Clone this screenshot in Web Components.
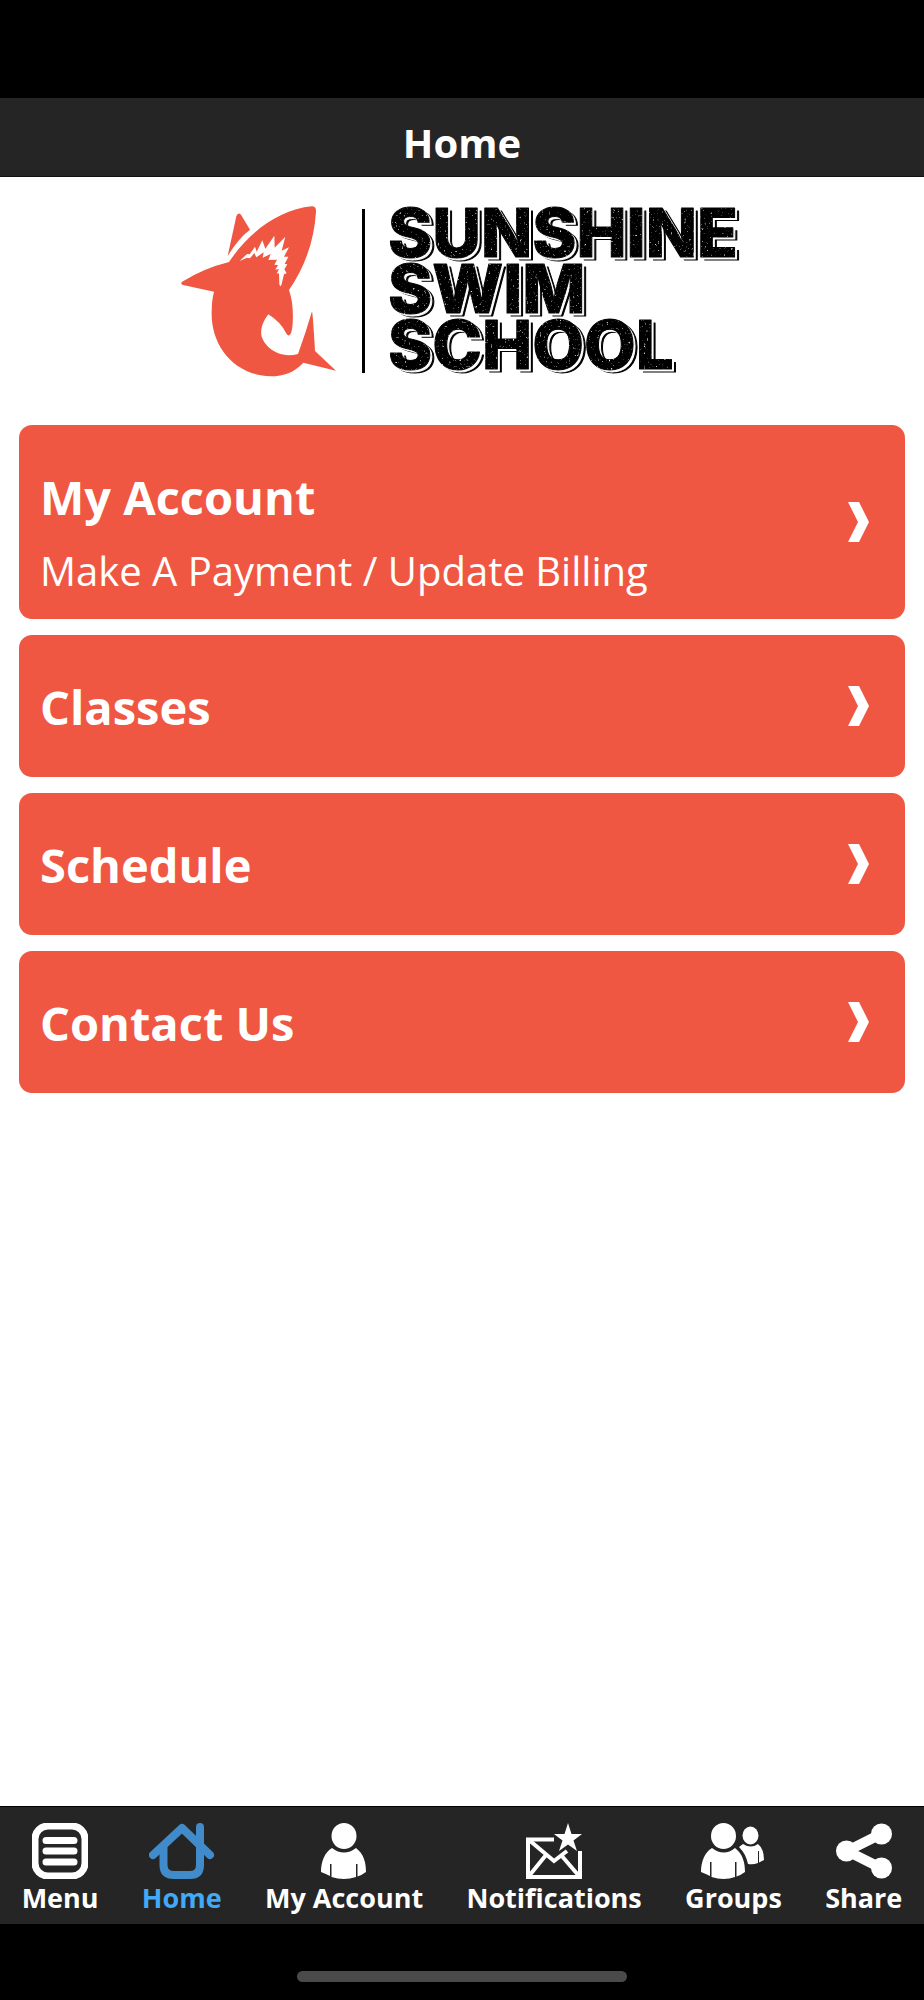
<!DOCTYPE html>
<html lang="en">
<head>
<meta charset="utf-8">
<meta name="viewport" content="width=device-width, initial-scale=1">
<title>Sunshine Swim School</title>
<style>
body { margin: 0; background: #fff; font-family: "Open Sans", "Noto Sans", sans-serif; }
</style>
</head>
<body>
<swim-app>
  <app-header slot="header">Home</app-header>
  <school-logo></school-logo>
  <nav-cards>
    <link-card subtitle="Make A Payment / Update Billing">My Account</link-card>
    <link-card>Classes</link-card>
    <link-card>Schedule</link-card>
    <link-card>Contact Us</link-card>
  </nav-cards>
  <tab-bar slot="footer">
    <tab-item icon="menu">Menu</tab-item>
    <tab-item icon="home" active>Home</tab-item>
    <tab-item icon="person">My Account</tab-item>
    <tab-item icon="mail">Notifications</tab-item>
    <tab-item icon="group">Groups</tab-item>
    <tab-item icon="share">Share</tab-item>
  </tab-bar>
</swim-app>
<script>
const define = (name, render) => customElements.define(name, class extends HTMLElement {
  constructor() { super(); this.attachShadow({ mode: 'open' }); }
  connectedCallback() { this.shadowRoot.innerHTML = render(this); }
});

define('swim-app', () => `
<style>
:host { display: flex; flex-direction: column; min-height: 100vh; background: #fff; }
.safe { height: 98px; background: #000; }
main { flex: 1; display: flex; flex-direction: column; }
.gesture { height: 76px; box-sizing: border-box; padding-top: 47px; background: #000; }
.gesture div { width: 330px; height: 11px; margin: 0 auto; border-radius: 6px; background: #4a4a4a; }
</style>
<div class="safe"></div><slot name="header"></slot>
<main><slot></slot></main>
<slot name="footer"></slot><div class="gesture"><div></div></div>`);

define('app-header', () => `
<style>
:host { display: block; box-sizing: border-box; height: 79px; padding-top: 17px; background: #252525; border-bottom: 1px solid #111; }
h1 { margin: 0; font-size: 40px; line-height: 56px; font-weight: 700; text-align: center; color: #fff; }
</style><h1><slot></slot></h1>`);

define('school-logo', () => `
<style>
:host { display: flex; justify-content: center; padding: 29px 0 48px; }
.shark { width: 156px; height: 171px; margin-right: 25px; }
.bar { width: 3px; height: 164px; margin: 3px 26px 0 0; background: #000; }
.name { width: 353px; height: 171px; overflow: visible; }
text { font-family: Inter, sans-serif; font-weight: 800; font-size: 67px; fill: #000; stroke: #000; stroke-width: 1px; stroke-linejoin: round; }
</style>
<svg class="shark" viewBox="32 32 468 513" aria-hidden="true">
<g fill="#ef5742">
<path d="M172 182 L198 63Q203 49 212 58L239 103Q205 128 172 182Z"/>
<path d="M176 200C235 112 325 42 425 33Q438 33 437 49C432 130 407 210 356 284C367 315 369 350 367 385Q365 414 357 420Q351 422 347 413Q331 380 294 357C277 380 271 398 273 420C278 446 318 493 383 476Q407 410 425 348Q428 360 434 467L497 526L399 502C370 532 342 542 301 543C190 540 121 450 124 350Q124 315 131 289L38 269Q27 264 38 258Q100 219 176 200Z"/>
</g>
<path fill="#fff" d="M208 197L230 176L238 177L254 154L259 169L276 135L285 160L312 121L313 157L345 124L334 166L356 156L341 184L354 184L343 206L351 207L342 222L349 234L341 237L333 270Q329 276 327 267L326 234L319 235L326 221L315 223L323 209L312 208L320 193L294 194L301 176L277 187L280 171L258 186L252 173L239 189L230 187Z"/>
</svg>
<div class="bar"></div>
<svg class="name" viewBox="0 0 353 171" role="img" aria-label="Sunshine Swim School">
<filter id="stamp" x="-5%" y="-5%" width="110%" height="110%" color-interpolation-filters="sRGB">
  <feOffset in="SourceGraphic" dx="4" dy="3" result="shade"/>
  <feOffset in="SourceAlpha" dx="2" dy="2" result="gap"/>
  <feFlood flood-color="#fff"/><feComposite in2="gap" operator="in" result="white"/>
  <feTurbulence type="fractalNoise" baseFrequency="0.45" numOctaves="2" seed="4"/>
  <feColorMatrix values="0 0 0 0 1  0 0 0 0 1  0 0 0 0 1  4 0 0 0 -2.6"/>
  <feComposite in2="SourceAlpha" operator="in" result="specks"/>
  <feMerge><feMergeNode in="shade"/><feMergeNode in="white"/><feMergeNode in="SourceGraphic"/><feMergeNode in="specks"/></feMerge>
</filter>
<g filter="url(#stamp)"><text x="-3" y="51">SUNSHINE</text><text x="-3" y="107">SWIM</text><text x="-3" y="163">SCHOOL</text></g>
</svg>`);

define('nav-cards', () => `
<style>:host { display: flex; flex-direction: column; gap: 16px; padding: 0 19px; }</style><slot></slot>`);

define('link-card', el => {
  const subtitle = el.getAttribute('subtitle');
  return `
<style>
:host { display: block; }
a { display: flex; align-items: center; justify-content: space-between; padding: 0 36px 0 21px; border-radius: 13px; background: #ef5742; color: #fff; text-decoration: none; }
.text { padding: 36px 0 34px; }
.text.double { padding-bottom: 10px; }
.title { display: block; font-size: 47px; line-height: 72px; font-weight: 700; }
.sub { display: block; font-size: 40px; line-height: 76px; font-weight: 400; }
svg { width: 21px; height: 40px; flex: none; }
</style>
<a href="#"><span class="text ${subtitle ? 'double' : ''}"><span class="title"><slot></slot></span>${subtitle ? `<span class="sub">${subtitle}</span>` : ''}</span>
<svg viewBox="0 0 21 40" aria-hidden="true"><path fill="#fff" d="M0 0H11L21 20L11 40H0L10 20Z"/></svg></a>`;
});

define('tab-bar', () => `
<style>
:host { display: block; background: #252525; border-top: 1px solid #000; }
nav { display: flex; justify-content: space-around; box-sizing: border-box; height: 117px; padding-top: 16px; }
</style><nav><slot></slot></nav>`);

const icons = {
  menu: [56, '<rect x="3" y="3" width="50" height="50" rx="13" fill="none" stroke="currentColor" stroke-width="7"/><path d="M14 17.500H42M14 28H42M14 39H42" stroke="currentColor" stroke-width="7" stroke-linecap="round"/>'],
  home: [66, '<g fill="none" stroke="currentColor" stroke-width="8" stroke-linecap="round" stroke-linejoin="round"><path d="M4 32L33 5L61 32M51 4V22"/><path d="M14.500 24V42Q14.500 52 25 52H41Q51 52 51 42V24"/></g>'],
  person: [46, '<ellipse cx="23" cy="13" rx="12.500" ry="13"/><path d="M11 25Q23 34 35 25C43 31 45 40 45 49Q41 52 36.500 53.500V41H35V54Q23 58 10.500 54V41H9V53Q5 51 0 49C0 38 4 29 11 25Z"/>'],
  mail: [56, '<path d="M28 16.500H2V54H54V28" fill="none" stroke="currentColor" stroke-width="4"/><path d="M3 17L28 38L41 28M3 53L20 32M53 53L35 32" fill="none" stroke="currentColor" stroke-width="4"/><path d="M42 0L45.500 11H56L47.500 17.500L51 28L42 21.500L33 28L36.500 17.500L28 11H38.500Z"/>'],
  group: [64, '<ellipse cx="22.500" cy="13" rx="12.500" ry="13"/><path d="M11 25Q23 34 34 25C42 31 44 40 44 49Q40 52 35.500 53.500V39H34V54Q23 58 10.500 54V39H9V53Q5 51 0 49C0 38 4 29 11 25Z"/><ellipse cx="49.500" cy="12.500" rx="8" ry="9"/><path d="M42 21Q50 26 57 21Q63 26 63 37L58 39.500V28H57V40Q52 42 47 41Q45 31 38 24Z"/>'],
  share: [56, '<circle cx="10.500" cy="28" r="10.500"/><circle cx="45.500" cy="11" r="10.500"/><circle cx="45.500" cy="45" r="10.500"/><path d="M45 11L11 28L45 45" fill="none" stroke="currentColor" stroke-width="10"/>']
};

define('tab-item', el => {
  const [w, art] = icons[el.getAttribute('icon')];
  return `
<style>
:host { display: block; }
a { display: flex; flex-direction: column; align-items: center; color: #fff; text-decoration: none; font-size: 27px; line-height: 38px; font-weight: 700; white-space: nowrap; }
svg { display: block; height: 56px; fill: currentColor; }
:host([active]) a { color: #41a9f7; }
:host([active]) svg { color: #428bca; }
</style>
<a href="#"><svg width="${w}" viewBox="0 0 ${w} 56" aria-hidden="true">${art}</svg><slot></slot></a>`;
});
</script>
</body>
</html>
